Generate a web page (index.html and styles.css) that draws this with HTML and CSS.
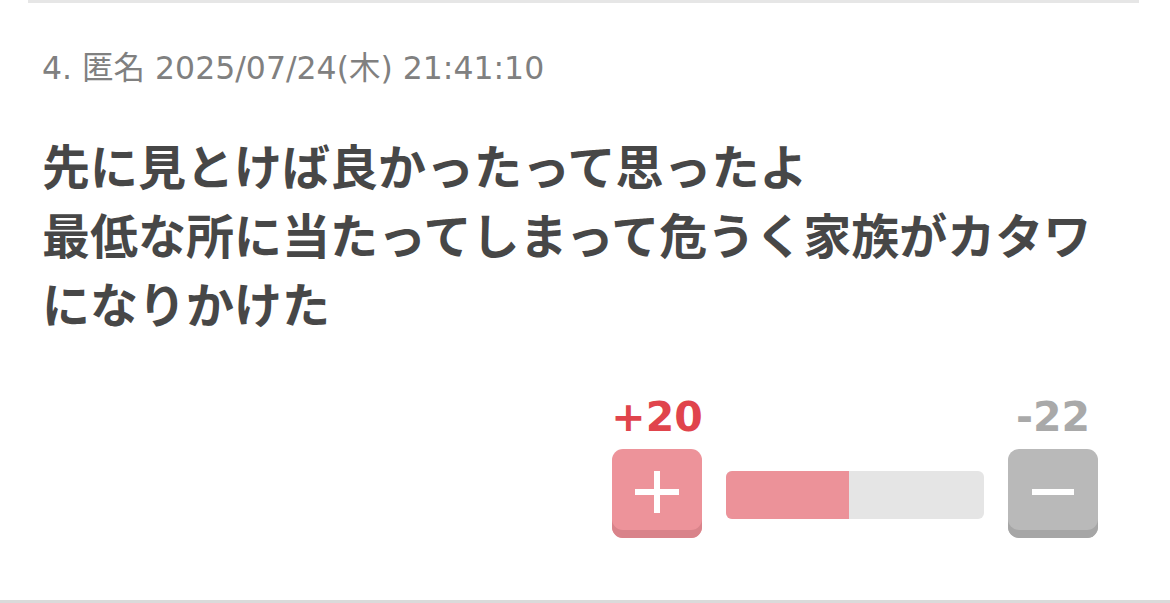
FILE: index.html
```html
<!DOCTYPE html>
<html>
<head>
  <meta charset="utf-8">
  <link rel="stylesheet" href="styles.css">
</head>
<body>

  <div class="prev-card"></div>

  <div class="comment">
    <p class="comment-meta">4. 匿名 2025/07/24(木) 21:41:10</p>
    <p class="comment-body">先に見とけば良かったって思ったよ<br>最低な所に当たってしまって危うく家族がカタワになりかけた</p>

    <div class="vote">
      <div class="vote-item">
        <span class="vote-count plus">+20</span>
        <button type="button" class="vote-btn plus" aria-label="plus">
          <svg width="44" height="42" viewBox="0 0 44 42">
            <rect x="0" y="18" width="44" height="6" fill="#fff"/>
            <rect x="19" y="0" width="6" height="42" fill="#fff"/>
          </svg>
        </button>
      </div>

      <div class="meter">
        <div class="meter-fill" style="width: 47.6%"></div>
      </div>

      <div class="vote-item">
        <span class="vote-count minus">-22</span>
        <button type="button" class="vote-btn minus" aria-label="minus">
          <svg width="42" height="6" viewBox="0 0 42 6">
            <rect x="0" y="0" width="42" height="6" fill="#fff"/>
          </svg>
        </button>
      </div>
    </div>
  </div>

</body>
</html>
```

FILE: styles.css
```css
body {
  margin: 0;
  background-color: #fff;
  font-family: "DejaVu Sans", "Noto Sans CJK JP", sans-serif;
}
.prev-card {
  height: 3px;
  margin: 0 31px 0 28px;
  background-color: #e6e6e6;
}
.comment {
  padding: 45px 42px 62px 42px;
  border-bottom: 3px solid #dadada;
}
.comment-meta {
  margin: 0;
  font-size: 31.5px;
  line-height: 40px;
  color: #808080;
}
.comment-body {
  max-width: 1070px;
  margin: 42px 0 0 0;
  font-family: "Noto Sans CJK JP", sans-serif;
  font-weight: bold;
  font-size: 48px;
  line-height: 69px;
  color: #474747;
}
.vote {
  display: flex;
  justify-content: flex-end;
  align-items: flex-end;
  gap: 24px;
  margin-top: 60px;
  padding-right: 30px;
}
.vote-item {
  display: flex;
  flex-direction: column;
  align-items: center;
  gap: 11px;
  width: 90px;
}
.vote-count {
  font-family: "DejaVu Sans", sans-serif;
  font-weight: bold;
  font-size: 41px;
  line-height: 41px;
}
.vote-count.plus {
  color: #e0444c;
}
.vote-count.minus {
  color: #a9a9a9;
}
.vote-btn {
  display: flex;
  align-items: center;
  justify-content: center;
  width: 90px;
  height: 89px;
  padding: 0 0 3px 0;
  border: none;
  border-radius: 11px;
}
.vote-btn.plus {
  background-color: #ed939a;
  box-shadow: inset 0 -8px 0 #d9838a;
}
.vote-btn.minus {
  background-color: #b9b9b9;
  box-shadow: inset 0 -8px 0 #a6a6a6;
}
.meter {
  width: 258px;
  height: 48px;
  margin-bottom: 19px;
  border-radius: 6px;
  background-color: #e5e5e5;
  overflow: hidden;
}
.meter-fill {
  height: 100%;
  background-color: #ec9299;
}
```
